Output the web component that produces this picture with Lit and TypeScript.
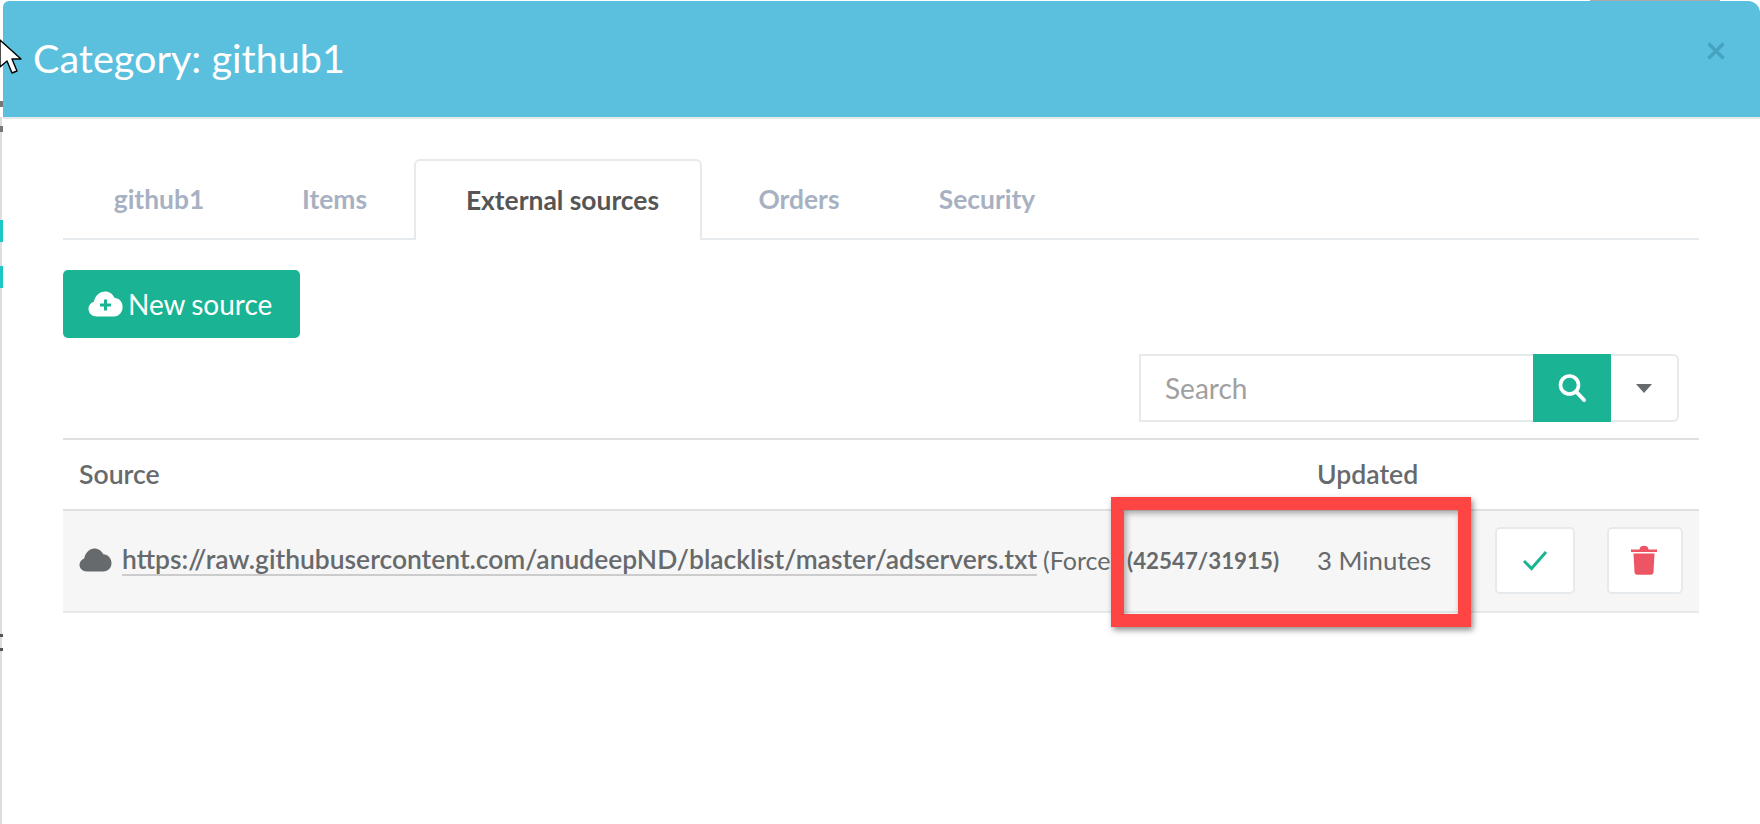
import { LitElement, html, css } from "lit";
import { customElement } from "lit/decorators.js";

@customElement("app-root")
export class AppRoot extends LitElement {
  static styles = css`
    :host { display: block; position: relative; width: 1760px; height: 824px; overflow: hidden; background: #fff; font-family: Lato, "Open Sans", sans-serif; color: #676a6c; }
    * { box-sizing: border-box; }
    .modal { margin-left: 3px; padding-top: 1px; }
    .head { background: #5bc0de; border-top-left-radius: 6px; border-top-right-radius: 12px; display: flex; align-items: center; justify-content: space-between; padding: 0 34px 2px 30px; box-sizing: content-box; height: 114px; border-bottom: 2px solid #e7eaec; }
    .head h1 { margin: 0; font-size: 39.600px; font-weight: 400; color: #fff; line-height: 44px; }
    .close { width: 20px; height: 20px; display: block; margin-bottom: 14px; }
    .body { padding: 41px 61px 0 60px; }
    .tabs { display: flex; height: 80px; border-bottom: 2px solid #e7eaec; font-size: 26.400px; font-weight: 700; color: #a7b1c2; }
    .tab { display: flex; align-items: center; justify-content: center; height: 80px; margin-bottom: -2px; padding-bottom: 3px; }
    .t1 { width: 192px; }
    .t2 { width: 159px; }
    .t3 { width: 288px; }
    .t4 { width: 194px; }
    .t5 { width: 182px; }
    .tab.active { background: #fff; color: #555; border: 2px solid #e7eaec; border-bottom: 0; border-radius: 6px 6px 0 0; height: 81px; margin-top: -1px; padding-left: 9px; padding-bottom: 1px; }
    .btn-new { margin-top: 30px; width: 237px; height: 68px; border-radius: 5px; background: #1ab394; color: #fff; display: flex; align-items: center; padding-left: 25px; gap: 5px; font-size: 28px; }
    .btn-new span { word-spacing: -1px; }
    .btn-new svg { width: 35px; height: 26px; }
    .tools { display: flex; justify-content: flex-end; margin-top: 16px; padding-right: 20px; }
    .search { width: 394px; height: 68px; border: 2px solid #e7eaec; border-right: 0; font-size: 28px; color: #a0a0a0; display: flex; align-items: center; padding-left: 24px; }
    .go { width: 78px; height: 68px; background: #1ab394; display: flex; align-items: center; justify-content: center; }
    .drop { width: 68px; height: 68px; border: 2px solid #e7eaec; border-left: 0; border-radius: 0 6px 6px 0; display: flex; align-items: center; justify-content: center; }
    .caret { width: 0; height: 0; border: 8px solid transparent; border-top: 9px solid #676a6c; border-bottom: 0; }
    .table { margin-top: 16px; border-top: 2px solid #e0e0e0; }
    .row { display: grid; grid-template-columns: 1254px 1fr; align-items: center; }
    .th { height: 71px; border-bottom: 2px solid #e0e0e0; font-size: 26.600px; font-weight: 600; padding-bottom: 2px; }
    .th > div:first-child { padding-left: 16px; }
    .tr { height: 102px; background: #f6f6f6; border-bottom: 2px solid #e7eaec; font-size: 26.600px; position: relative; }
    .src { display: flex; align-items: center; padding-left: 16px; white-space: nowrap; padding-bottom: 2px; }
    .src svg { width: 33px; height: 24px; margin-right: 10px; flex: none; }
    .src a { color: #676a6c; font-weight: 600; font-size: 26.450px; border-bottom: 2px solid #ccc; line-height: 29px; }
    .force { margin-left: 6px; width: 84px; overflow: hidden; font-size: 25px; }
    .count { font-size: 22.300px; font-weight: 700; }
    .upd { display: flex; align-items: center; justify-content: space-between; padding-right: 16px; font-size: 25.800px; }
    .upd > span { padding-bottom: 2px; }
    .acts { display: flex; gap: 32px; margin-top: -2px; }
    .act { height: 67px; background: #fff; border: 2px solid #e7eaec; border-radius: 5px; display: flex; align-items: center; justify-content: center; }
    .act.ok { width: 80px; }
    .act.del { width: 76px; }
    .act.del svg { margin-right: 2px; }
    .annot { position: absolute; left: 1111px; top: 497px; width: 360px; height: 130px; border: 13px solid #ff4444; box-shadow: 2px 3px 6px rgba(0,0,0,.45), inset 2px 3px 6px rgba(0,0,0,.35); }
    .strip { position: absolute; left: 0; top: 117px; bottom: 0; width: 2px; background: #ddd; }
    .mark { position: absolute; left: 0; width: 3px; }
    .m1 { top: 101px; height: 6px; background: #777; }
    .m2 { top: 126px; height: 6px; background: #777; }
    .m3 { top: 220px; height: 22px; background: #1ac6c6; }
    .m4 { top: 266px; height: 22px; background: #1ac6c6; }
    .m5 { top: 634px; height: 3px; background: #555; }
    .m6 { top: 648px; height: 3px; background: #555; }
    .cursor { position: absolute; left: -2px; top: 38px; width: 26px; height: 40px; }
    .topfrag { position: absolute; top: 0; left: 1590px; width: 130px; height: 1px; background: #aaa; }
  `;

  render() {
    return html`
      <div class="topfrag"></div>
      <div class="modal">
        <div class="head">
          <h1>Category: github1</h1>
          <svg class="close" viewBox="0 0 20 20"><path d="M2.500 2.500 17.500 17.500M17.500 2.500 2.500 17.500" stroke="#46a3bf" stroke-width="3.400" fill="none"/></svg>
        </div>
        <div class="body">
          <div class="tabs">
            <div class="tab t1">github1</div>
            <div class="tab t2">Items</div>
            <div class="tab t3 active">External sources</div>
            <div class="tab t4">Orders</div>
            <div class="tab t5">Security</div>
          </div>
          <div class="btn-new">
            <svg viewBox="0 0 35 26"><path d="M9 25.500C3.800 25.500.5 22 .5 18c0-3.400 2.200-6.200 5.400-7.200C6.800 5 11.600.5 17 .5c4.400 0 8 2.700 9.600 6.600 4.800.1 8 3.900 8 9 0 5.300-3.700 9.400-8.600 9.400Z" fill="#fff"/><path d="M17.500 8.500v11M12 14h11" stroke="#1ab394" stroke-width="3"/></svg>
            <span>New source</span>
          </div>
          <div class="tools">
            <div class="search">Search</div>
            <div class="go"><svg width="30" height="30" viewBox="0 0 30 30"><circle cx="12.500" cy="12" r="9" fill="none" stroke="#fff" stroke-width="3.600"/><path d="M19 18.500 27 27" stroke="#fff" stroke-width="4" stroke-linecap="round"/></svg></div>
            <div class="drop"><div class="caret"></div></div>
          </div>
          <div class="table">
            <div class="row th"><div>Source</div><div>Updated</div></div>
            <div class="row tr">
              <div class="src">
                <svg viewBox="0 0 33 24"><path d="M8 23.500C3.500 23.500.5 20.500.5 17c0-3 1.900-5.500 4.700-6.400C6 5 10.500.5 15.500.5c3.900 0 7.200 2.300 8.700 5.800 4.800.2 8.300 3.900 8.300 8.800 0 4.900-3.400 8.400-8 8.400Z" fill="#676a6c"/></svg>
                <a>https://raw.githubusercontent.com/anudeepND/blacklist/master/adservers.txt</a>
                <span class="force">(Force</span>
                <span class="count">(42547/31915)</span>
              </div>
              <div class="upd">
                <span>3 Minutes</span>
                <div class="acts">
                  <div class="act ok"><svg width="26" height="22" viewBox="0 0 26 22"><path d="M2 12 9.500 19.500 24 3" fill="none" stroke="#1ab394" stroke-width="3"/></svg></div>
                  <div class="act del"><svg width="26" height="30" viewBox="0 0 26 30"><path d="M0 4.500h26V7H0ZM8.500 4.500C9 1.500 10.500.8 13 .8s4 .7 4.500 3.700Z" fill="#ed5565"/><path d="M2.500 8.500h21l-1 18.500c-.1 1.700-1 2.800-2.800 2.800H6.300c-1.800 0-2.700-1.100-2.800-2.800Z" fill="#ed5565"/></svg></div>
                </div>
              </div>
            </div>
          </div>
        </div>
      </div>
      <div class="strip"></div>
      <div class="mark m1"></div>
      <div class="mark m2"></div>
      <div class="mark m3"></div>
      <div class="mark m4"></div>
      <div class="mark m5"></div>
      <div class="mark m6"></div>
      <div class="annot"></div>
      <svg class="cursor" viewBox="0 0 26 40"><path d="M2 2V29L9 23 14 35 19 33 14 21 23 21Z" fill="#fff" stroke="#000" stroke-width="1.400" stroke-linejoin="round"/></svg>
    `;
  }
}
